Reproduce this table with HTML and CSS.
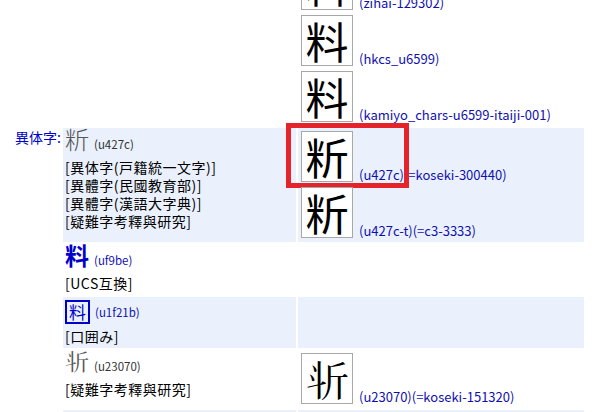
FILE: index.html
```html
<!DOCTYPE html>
<html lang="ja">
<head>
    <meta charset="UTF-8">
    <title>異体字</title>
    <link rel="stylesheet" href="styles.css">
</head>
<body>
    <div class="variants">
        <div class="row">
            <div class="label"></div>
            <div class="cell"></div>
            <div class="cell glyphs">
                <div class="item"><span class="box">料</span><span class="src">(zihai-129302)</span></div>
                <div class="item"><span class="box">料</span><span class="src">(hkcs_u6599)</span></div>
                <div class="item"><span class="box">料</span><span class="src">(kamiyo_chars-u6599-itaiji-001)</span></div>
            </div>
        </div>
        <div class="row alt">
            <div class="label">異体字:</div>
            <div class="cell">
                <div class="head"><span class="big">&#x427C;</span><span class="code">(u427c)</span></div>
                <div class="note">[異体字(戸籍統一文字)]</div>
                <div class="note">[異體字(民國教育部)]</div>
                <div class="note">[異體字(漢語大字典)]</div>
                <div class="note">[疑難字考釋與研究]</div>
            </div>
            <div class="cell glyphs">
                <div class="item">
                    <span class="box">&#x427C;</span><span class="src">(u427c)(=koseki-300440)</span>
                    <span class="mark"></span>
                </div>
                <div class="item"><span class="box">&#x427C;</span><span class="src">(u427c-t)(=c3-3333)</span></div>
            </div>
        </div>
        <div class="row">
            <div class="label"></div>
            <div class="cell">
                <div class="head"><span class="big link">&#xF9BE;</span><span class="code link">(uf9be)</span></div>
                <div class="note">[UCS互換]</div>
            </div>
            <div class="cell glyphs"></div>
        </div>
        <div class="row alt">
            <div class="label"></div>
            <div class="cell">
                <div class="head"><span class="boxed">料</span><span class="code link">(u1f21b)</span></div>
                <div class="note">[口囲み]</div>
            </div>
            <div class="cell glyphs"></div>
        </div>
        <div class="row">
            <div class="label"></div>
            <div class="cell">
                <div class="head"><span class="big">&#x23070;</span><span class="code">(u23070)</span></div>
                <div class="note">[疑難字考釋與研究]</div>
            </div>
            <div class="cell glyphs">
                <div class="item"><span class="box">&#x23070;</span><span class="src">(u23070)(=koseki-151320)</span></div>
            </div>
        </div>
        <div class="row alt">
            <div class="label"></div>
            <div class="cell"></div>
            <div class="cell glyphs"></div>
        </div>
    </div>
</body>
</html>
```

FILE: styles.css
```css
html {
    overflow: hidden;
}
body {
    margin: 0 8px;
    background: #fff;
    color: #000;
    font-family: "Noto Sans CJK JP", "Noto Sans", sans-serif;
    font-size: 14px;
}
.variants {
    display: grid;
    grid-template-columns: 53px 233px 320px;
    gap: 2px;
    margin-top: -44px;
}
.row {
    display: contents;
}
.label {
    color: #0000cc;
    text-align: right;
    line-height: 18px;
}
.cell {
    padding: 2px 2px 3px;
}
.alt .cell {
    background: #eaf1fd;
}
.head {
    height: 28px;
    line-height: 18px;
    white-space: nowrap;
}
.big {
    font-size: 24px;
    font-weight: 300;
    color: #555;
}
.big.link {
    color: #0000cc;
    font-weight: bold;
}
.boxed {
    display: inline-block;
    width: 21px;
    height: 20px;
    margin-top: 1px;
    border: 2px solid #0000cc;
    color: #0000cc;
    font-size: 17px;
    line-height: 20px;
    text-align: center;
    vertical-align: top;
}
.code {
    margin-left: 5px;
    font-size: 11.5px;
    color: #333;
}
.boxed + .code {
    line-height: 26px;
}
.code.link {
    color: #1010b0;
}
.note {
    line-height: 18px;
    letter-spacing: 0.5px;
    white-space: nowrap;
}
.glyphs {
    padding: 3px 3px 4px;
}
.item {
    display: flex;
    align-items: flex-end;
    margin-bottom: 5px;
    position: relative;
}
.item:last-child {
    margin-bottom: 0;
}
.box {
    width: 50px;
    height: 49px;
    border: 1px solid #a8a8a8;
    background: #fff;
    font-size: 43px;
    line-height: 49px;
    text-align: center;
    overflow: hidden;
}
.src {
    margin-left: 6px;
    color: #1010b0;
    font-size: 13px;
    line-height: 15px;
    white-space: nowrap;
}
.mark {
    position: absolute;
    left: -15px;
    top: -8px;
    width: 113px;
    height: 55px;
    border: 5px solid #e5232a;
}
```
